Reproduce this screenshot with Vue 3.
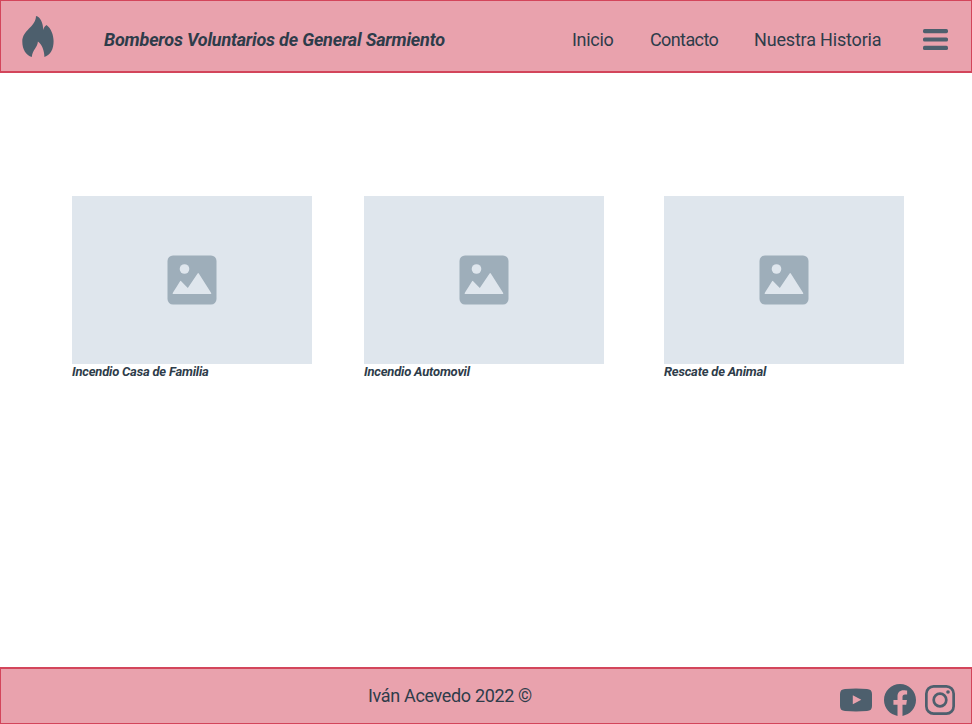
<script setup>
const links = [
  { label: 'Inicio', key: 'home' },
  { label: 'Contacto', key: 'contact' },
  { label: 'Nuestra Historia', key: 'history' }
]
const cards = [
  { title: 'Incendio Casa de Familia', key: 'house' },
  { title: 'Incendio Automovil', key: 'car' },
  { title: 'Rescate de Animal', key: 'animal' }
]
</script>

<template>
  <div class="page">
    <header class="header">
      <svg class="flame" viewBox="0 0 32 42">
        <path d="M14 0C18.4 .8 21.1 7.2 21.3 14C21.7 11.8 22.8 10.1 24.5 9C29.2 12.4 31.6 19.2 31.6 25.3C31.6 33 28.6 39.3 22.4 41C22.4 35 20 28.6 15.9 25.6C15.9 30.6 10.2 34.7 9.8 41C4.2 39.4 .3 33.4 .3 25.7C.3 13.8 13.8 11.2 14 0Z" />
      </svg>
      <h1 class="brand">Bomberos Voluntarios de General Sarmiento</h1>
      <nav class="nav">
        <a v-for="l in links" :key="l.key" :class="['link', l.key]">{{ l.label }}</a>
      </nav>
      <svg class="menu" viewBox="0 0 25 22">
        <rect width="25" height="4.2" rx="1.6" />
        <rect y="8.4" width="25" height="4.2" rx="1.6" />
        <rect y="16.8" width="25" height="4.2" rx="1.6" />
      </svg>
    </header>

    <main class="cards">
      <article v-for="c in cards" :key="c.key" class="card">
        <div class="picture">
          <svg class="placeholder" viewBox="0 0 50 50">
            <rect class="frame" x=".5" y=".5" width="49" height="49" rx="5.5" />
            <circle class="cut" cx="17.5" cy="14" r="4.8" />
            <path class="cut" d="M5.7 38L13.1 26.2Q13.6 25.5 14.2 26.2L20.8 33L30.6 18.5Q31.2 17.7 31.8 18.5L44.2 38Q44.6 39 43.7 39H6.2Q5.3 39 5.7 38Z" />
          </svg>
        </div>
        <h2 :class="['title', c.key]">{{ c.title }}</h2>
      </article>
    </main>

    <footer class="footer">
      <p class="copy">Iván Acevedo 2022 ©</p>
      <div class="social">
        <svg class="youtube" viewBox="0 0 32 24">
          <path fill-rule="evenodd" d="M5 1Q16 .2 27 1Q32 1.2 32 6V18Q32 22.8 27 23Q16 23.8 5 23Q0 22.8 0 18V6Q0 1.2 5 1ZM12.8 7.3V16.3L21.3 11.8Z" />
        </svg>
        <svg class="facebook" viewBox="0 0 24 24">
          <path d="M24 12.073C24 5.446 18.627 0 12 0S0 5.446 0 12.073C0 18.063 4.388 23.027 10.125 23.927V15.542H7.078V12.073H10.125V9.413C10.125 6.387 11.917 4.716 14.658 4.716C15.97 4.716 17.344 4.951 17.344 4.951V7.923H15.83C14.34 7.923 13.875 8.853 13.875 9.808V12.073H17.203L16.671 15.542H13.875V23.927C19.612 23.027 24 18.063 24 12.073Z" />
        </svg>
        <svg class="instagram" viewBox="0 0 30 30">
          <rect class="line" x="1.35" y="1.35" width="27.3" height="27.3" rx="7.3" />
          <circle class="line" cx="15" cy="15" r="6.3" />
          <circle cx="23" cy="7" r="1.8" />
        </svg>
      </div>
    </footer>
  </div>
</template>

<style>
body {
  margin: 0;
  background: #fff;
}
</style>

<style scoped>
.page {
  box-sizing: border-box;
  display: flex;
  flex-direction: column;
  height: 100vh;
  font-family: Roboto, "Liberation Sans", sans-serif;
  color: #2e3c4a;
}
svg {
  display: block;
  flex: none;
  fill: #4d5f6d;
}
h1, h2, p {
  margin: 0;
  white-space: nowrap;
}
.header, .footer {
  box-sizing: border-box;
  display: flex;
  background: #e9a2ad;
  border: 1px solid #d3455b;
}
.header {
  height: 73px;
  border-bottom-width: 2px;
  align-items: flex-start;
}
.flame {
  width: 32px;
  height: 42px;
  margin: 15px 0 0 21px;
}
.brand {
  width: 418px;
  margin: 27px 0 0 50px;
  font-size: 18px;
  line-height: 24px;
  font-weight: 700;
  font-style: italic;
  letter-spacing: -0.2px;
}
.nav {
  display: flex;
  width: 351px;
  margin: 27px 0 0 50px;
  font-size: 18px;
  line-height: 24px;
}
.link {
  white-space: nowrap;
}
.home {
  width: 78px;
  letter-spacing: -0.3px;
}
.contact {
  width: 104px;
  letter-spacing: -0.6px;
}
.history {
  letter-spacing: -0.18px;
}
.menu {
  width: 25px;
  height: 22px;
  margin-top: 28px;
}
.cards {
  flex: 1;
  display: grid;
  grid-template-columns: 292px 300px 240px;
  align-content: start;
  padding: 123px 0 0 72px;
}
.card {
  width: 240px;
}
.picture {
  display: flex;
  align-items: center;
  justify-content: center;
  height: 168px;
  background: #dfe6ed;
}
.placeholder {
  width: 50px;
  height: 50px;
}
.frame {
  fill: #9eaeba;
}
.cut {
  fill: #dfe6ed;
}
.title {
  font-size: 13px;
  line-height: 16px;
  font-weight: 700;
  font-style: italic;
  letter-spacing: -0.21px;
}
.footer {
  height: 57px;
  border-top-width: 2px;
}
.copy {
  width: 472px;
  margin: 15px 0 0 367px;
  font-size: 18px;
  line-height: 24px;
  letter-spacing: -0.34px;
}
.social {
  display: flex;
  align-items: flex-start;
}
.youtube {
  width: 32px;
  height: 24px;
  margin-top: 19px;
}
.facebook {
  width: 32px;
  height: 32px;
  margin: 15px 9px 0 12px;
}
.instagram {
  width: 30px;
  height: 30px;
  margin-top: 16px;
}
.line {
  fill: none;
  stroke: #4d5f6d;
  stroke-width: 2.7;
}
</style>
